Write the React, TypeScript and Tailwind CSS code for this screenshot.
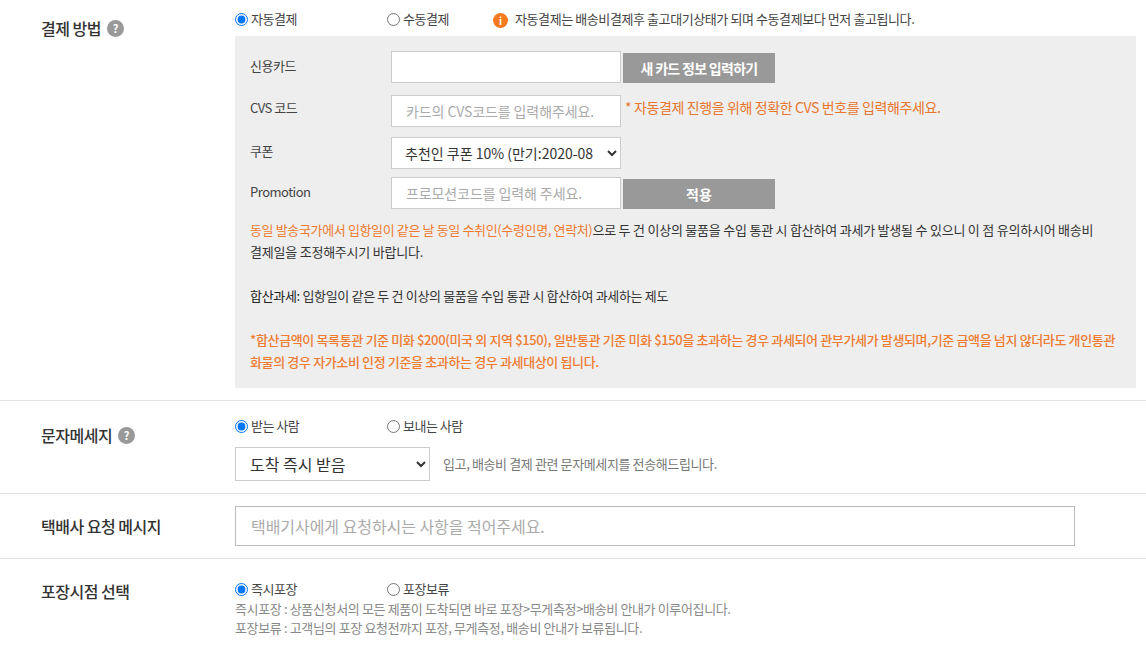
import React from "react";

const font = { fontFamily: '"Noto Sans CJK KR", "Noto Sans", sans-serif' };

function Help() {
  return (
    <span className="inline-flex w-[17px] h-[17px] ml-[6px] mt-[1px] rounded-full bg-[#999999] text-white text-[11px] font-bold items-center justify-center tracking-normal shrink-0">?</span>
  );
}

function Radio({ label, checked, name, width }: { label: string; checked?: boolean; name: string; width: string }) {
  return (
    <label className={`flex items-center h-[20px] text-[13px] tracking-[-0.5px] text-[#444] ${width}`}>
      <input type="radio" name={name} defaultChecked={checked} className="w-[13px] h-[13px] ml-[0px] mr-[3px] m-0" />
      <span>{label}</span>
    </label>
  );
}

function Title({ children }: { children: React.ReactNode }) {
  return <div className="flex items-center w-[194px] shrink-0 text-[16px] font-medium tracking-[-0.5px] text-[#333] h-[24px]">{children}</div>;
}

export default function App() {
  return (
    <div style={font} className="w-[1146px] h-[645px] overflow-hidden bg-white pl-[41px] pr-[10px]">
      <div className="-ml-[41px] pl-[41px] flex h-[400px] pt-[9px]">
        <div className="pt-[7px]"><Title>결제 방법<Help /></Title></div>
        <div className="flex-1">
          <div className="flex items-center h-[20px]">
            <Radio name="pay" label="자동결제" checked width="w-[152px]" />
            <Radio name="pay" label="수동결제" width="w-[106px]" />
            <span className="w-[15px] h-[15px] rounded-full bg-[#f47a20] text-white text-[10px] font-bold flex items-center justify-center mr-[7px] mt-[3px]">i</span>
            <span className="text-[13px] tracking-[-0.41px] text-[#444]">자동결제는 배송비결제후 출고대기상태가 되며 수동결제보다 먼저 출고됩니다.</span>
          </div>
          <div className="mt-[7px] h-[352px] bg-[#eeeeee] px-[15px] pt-[15px]">
            <div className="flex h-[32px] mb-[12px]">
              <div className="w-[141px] text-[13px] tracking-[-0.5px] text-[#444] pt-[5px]">신용카드</div>
              <input className="w-[230px] h-[32px] bg-white border border-[#cccccc]" />
              <button className="ml-[2px] mt-[2px] w-[152px] h-[30px] bg-[#999999] text-white text-[14px] font-bold tracking-[-0.7px]">새 카드 정보 입력하기</button>
            </div>
            <div className="flex h-[32px] mb-[10px]">
              <div className="w-[141px] text-[13px] tracking-[-0.5px] text-[#444] pt-[3px]">CVS 코드</div>
              <input placeholder="카드의 CVS코드를 입력해주세요." className="w-[230px] h-[32px] bg-white border border-[#cccccc] px-[14px] text-[14px] tracking-[-0.1px] placeholder:text-[#aaaaaa]" />
              <span className="ml-[4px] text-[14px] tracking-[-0.38px] leading-[25px] text-[#e8762d]">* 자동결제 진행을 위해 정확한 CVS 번호를 입력해주세요.</span>
            </div>
            <div className="flex h-[32px] mb-[8px]">
              <div className="w-[141px] text-[13px] tracking-[-0.5px] text-[#444] pt-[4px]">쿠폰</div>
              <select className="w-[230px] h-[32px] bg-white border border-[#cccccc] pl-[9px] text-[14px] text-[#333]">
                <option>추천인 쿠폰 10% (만기:2020-08</option>
              </select>
            </div>
            <div className="flex h-[32px] mb-[10px]">
              <div className="w-[141px] text-[13px] tracking-[-0.5px] text-[#444] pt-[5px]">Promotion</div>
              <input placeholder="프로모션코드를 입력해 주세요." className="w-[230px] h-[32px] bg-white border border-[#cccccc] px-[14px] text-[14px] tracking-[-0.1px] placeholder:text-[#aaaaaa]" />
              <button className="ml-[2px] mt-[2px] w-[152px] h-[30px] bg-[#999999] text-white text-[14px] font-bold">적용</button>
            </div>
            <div className="text-[13px] leading-[22px] tracking-[-0.33px] text-[#333] break-keep">
              <p><span className="text-[#ee7b30] tracking-[-0.36px]">동일 발송국가에서 입항일이 같은 날 동일 수취인(수령인명, 연락처)</span><span className="tracking-[-0.22px]">으로 두 건 이상의 물품을 수입 통관 시 합산하여 과세가 발생될 수 있으니 이 점 유의하시어 배송비 결제일을 조정해주시기 바랍니다.</span></p>
              <p className="mt-[22px]"><span className="text-[#222]">합산과세:</span> 입항일이 같은 두 건 이상의 물품을 수입 통관 시 합산하여 과세하는 제도</p>
              <p className="mt-[22px] text-[#ee7b30] font-medium tracking-[-0.36px]">*합산금액이 목록통관 기준 미화 $200(미국 외 지역 $150), 일반통관 기준 미화 $150을 초과하는 경우 과세되어 관부가세가 발생되며,기준 금액을 넘지 않더라도 개인통관 화물의 경우 자가소비 인정 기준을 초과하는 경우 과세대상이 됩니다.</p>
            </div>
          </div>
        </div>
      </div>

      <div className="-ml-[41px] pl-[41px] -mr-[10px] flex h-[93px] border-t border-[#e5e5e5] pt-[15px]">
        <div className="pt-[7px]"><Title>문자메세지<Help /></Title></div>
        <div>
          <div className="flex">
            <Radio name="sms" label="받는 사람" checked width="w-[152px]" />
            <Radio name="sms" label="보내는 사람" width="w-[106px]" />
          </div>
          <div className="flex items-center mt-[11px]">
            <select className="w-[195px] h-[34px] bg-white border border-[#cccccc] pl-[10px] text-[16px] text-[#333]">
              <option>도착 즉시 받음</option>
            </select>
            <span className="ml-[13px] text-[13px] tracking-[-0.38px] text-[#777]">입고, 배송비 결제 관련 문자메세지를 전송해드립니다.</span>
          </div>
        </div>
      </div>

      <div className="-ml-[41px] pl-[41px] -mr-[10px] flex items-center h-[65px] border-t border-[#e5e5e5]">
        <Title>택배사 요청 메시지</Title>
        <input placeholder="택배기사에게 요청하시는 사항을 적어주세요." className="w-[840px] h-[40px] bg-white border border-[#bbbbbb] px-[15px] text-[16px] tracking-[-0.05px] placeholder:text-[#aaaaaa]" />
      </div>

      <div className="-ml-[41px] pl-[41px] -mr-[10px] flex border-t border-[#e5e5e5] pt-[20px]">
        <Title>포장시점 선택</Title>
        <div>
          <div className="flex">
            <Radio name="pack" label="즉시포장" checked width="w-[152px]" />
            <Radio name="pack" label="포장보류" width="w-[106px]" />
          </div>
          <div className="text-[13px] leading-[19px] tracking-[-0.36px] text-[#888]">
            <p>즉시포장 : 상품신청서의 모든 제품이 도착되면 바로 포장&gt;무게측정&gt;배송비 안내가 이루어집니다.</p>
            <p>포장보류 : 고객님의 포장 요청전까지 포장, 무게측정, 배송비 안내가 보류됩니다.</p>
          </div>
        </div>
      </div>
    </div>
  );
}
